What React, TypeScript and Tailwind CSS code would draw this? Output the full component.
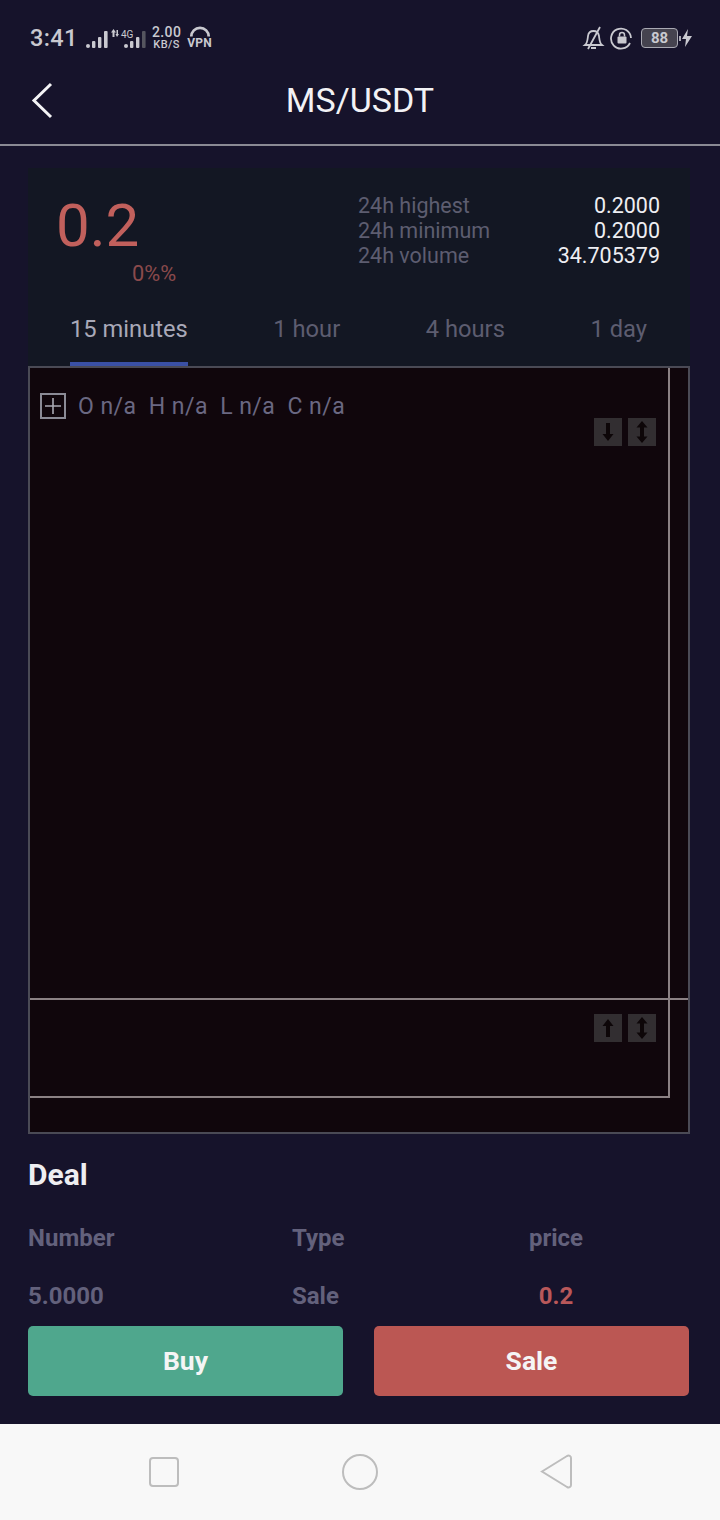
const Bars = ({ dim = false }: { dim?: boolean }) => (
  <svg width="22" height="17" viewBox="0 0 22 17" className="block">
    <circle cx="2" cy="15" r="2" fill="#c9c9d0" />
    <rect x="6" y="10" width="3.400" height="7" rx="1" fill="#c9c9d0" />
    <rect x="12" y="6" width="3.400" height="11" rx="1" fill="#c9c9d0" />
    <rect x="18" y="0" width="3.600" height="17" rx="1" fill={dim ? "#55555f" : "#c9c9d0"} />
  </svg>
);

const ArrowBtn = ({ type }: { type: "up" | "down" | "both" }) => (
  <div className="w-7 h-7 bg-[#322e31] flex items-center justify-center">
    <svg width="16" height="24" viewBox="0 0 16 24">
      {type === "down" && <path d="M6 3h4v11h3.500L8 21 2.500 14H6z" fill="#0d0608" />}
      {type === "up" && <path d="M6 21h4V10h3.500L8 3 2.500 10H6z" fill="#0d0608" />}
      {type === "both" && <path d="M8 1l5.500 6.500H10v9h3.500L8 23l-5.500-6.500H6v-9H2.500z" fill="#0d0608" />}
    </svg>
  </div>
);

export default function App() {
  const font = { fontFamily: "Roboto, sans-serif" };
  return (
    <div style={font} className="w-[720px] h-[1520px] bg-[#16132b] flex flex-col overflow-hidden">
      {/* status bar */}
      <div className="h-[72px] pl-[30px] pr-[28px] pt-[24px] flex justify-between items-start text-[#c9c9d0]">
        <div className="flex items-center h-[28px]">
          <span className="text-[23.500px] font-medium tracking-[0.4px] leading-none mt-[2px]">3:41</span>
          <div className="ml-[8px] mt-[3px]"><Bars /></div>
          <div className="ml-[2px] relative w-[38px] h-[20px] mt-[-1px]">
            <svg width="8" height="8" viewBox="0 0 8 8" className="absolute left-[1px] top-[1px]">
              <path d="M2.500 0L0 3.500h1.500V8h2V3.500H5zM6 8l2-3H7V1H5.500v4H4.500z" fill="#c9c9d0" />
            </svg>
            <span className="absolute left-[11px] top-[2px] text-[10px] leading-none">4G</span>
            <div className="absolute left-[14px] top-[3px]"><Bars dim /></div>
          </div>
          <div className="ml-[4px] flex flex-col items-center font-medium leading-none">
            <span className="text-[14px] leading-[13px] tracking-[0.4px]">2.00</span>
            <span className="text-[11px] leading-[12px] tracking-[0.4px]">KB/S</span>
          </div>
          <div className="ml-[6px] flex flex-col items-center -mt-[2px]">
            <svg width="22" height="13" viewBox="0 0 24 13" className="block">
              <path d="M2.500 12a9.500 9.500 0 0 1 19 0" fill="none" stroke="#c9c9d0" strokeWidth="3" />
              <path d="M7 6l7 4 1-2z" fill="#16132b" />
            </svg>
            <span className="text-[12px] leading-[11px] font-bold tracking-[0.2px]">VPN</span>
          </div>
        </div>
        <div className="flex items-center h-[28px]">
          <svg width="24" height="26" viewBox="0 0 24 26" fill="none" stroke="#c9c9d0" strokeWidth="1.800">
            <path d="M3 20c2.500-2 2.500-5 3-9 .4-3 2.500-5 5.500-5s5 2 5.500 5c.5 4 .5 7 3 9z" />
            <path d="M9 23h5M18 2L6 24" />
          </svg>
          <svg width="24" height="24" viewBox="0 0 24 24" className="ml-[4px]" fill="none">
            <path d="M20 17a10 10 0 1 1 1-5" stroke="#c9c9d0" strokeWidth="1.800" />
            <rect x="7.500" y="10.500" width="9" height="7" rx="1" fill="#c9c9d0" />
            <path d="M9.500 10.500V9a2.500 2.500 0 0 1 5 0v1.500" stroke="#c9c9d0" strokeWidth="1.500" />
          </svg>
          <div className="ml-[7px] w-[37px] h-[20px] rounded-[4px] border border-[#a9a9b3] bg-[#45434f] flex items-center justify-center text-[15px] font-bold leading-none">88</div>
          <div className="w-[2px] h-[5px] bg-[#a9a9b3] ml-[1px]" />
          <svg width="10" height="18" viewBox="0 0 10 18" className="ml-[1px]"><path d="M6 0L0 10h4l-1 8 7-11H5z" fill="#c9c9d0" /></svg>
        </div>
      </div>

      {/* header */}
      <div className="relative h-[74px] border-b-2 border-[#8a8a94] flex items-center justify-center">
        <svg width="24" height="38" viewBox="0 0 24 38" fill="none" className="absolute left-[31px] top-[10px]">
          <path d="M20 2L3 18.500 20 35" stroke="#f4f4f6" strokeWidth="3" />
        </svg>
        <span className="text-[34px] text-[#f2f2f5] leading-none -mt-[16px]">MS/USDT</span>
      </div>

      {/* ticker + intervals */}
      <div className="mx-[28px] mt-[22px] w-[662px] h-[198px] bg-[#131723] flex flex-col">
        <div className="h-[124px] flex">
          <div className="w-[330px] pl-[28px] pt-[24px] relative">
            <div className="text-[60px] leading-[68px] text-[#c1605c]">0.2</div>
            <div className="absolute left-[104px] top-[93px] text-[21.800px] leading-[26px] text-[#8a4a4c]">0%%</div>
          </div>
          <div className="flex-1 pt-[25px] pr-[30px] text-[21.500px] leading-[25px]">
            <div className="flex justify-between"><span className="text-[#5d5d70]">24h highest</span><span className="text-[#eeeef2]">0.2000</span></div>
            <div className="flex justify-between"><span className="text-[#5d5d70]">24h minimum</span><span className="text-[#eeeef2]">0.2000</span></div>
            <div className="flex justify-between"><span className="text-[#5d5d70]">24h volume</span><span className="text-[#eeeef2]">34.705379</span></div>
          </div>
        </div>
        <div className="flex-1 flex text-[23.700px] text-[#5d5d70] pl-[42px] pr-[43px] justify-between">
          <div className="flex flex-col items-center justify-between text-[#a9a9b8] h-[74px]">
            <span className="leading-[28px] mt-[23px]">15 minutes</span>
            <div className="w-full h-[4px] bg-[#3a50a5]" />
          </div>
          <span className="leading-[28px] mt-[23px]">1 hour</span>
          <span className="leading-[28px] mt-[23px]">4 hours</span>
          <span className="leading-[28px] mt-[23px]">1 day</span>
        </div>
      </div>

      {/* chart */}
      <div className="mx-[28px] w-[662px] h-[768px] bg-[#10060c] border-2 border-[#4a4a55] flex flex-col">
        <div className="h-[632px] border-b-2 border-[#8b8184]">
          <div className="relative w-[640px] h-full border-r-2 border-[#8b8184]">
            <div className="absolute left-[10px] top-[25px] flex items-center">
              <div className="w-[26px] h-[26px] border-2 border-[#8b8b96] flex items-center justify-center">
                <svg width="16" height="16" viewBox="0 0 16 16"><path d="M8 0v16M0 8h16" stroke="#a9a9b3" strokeWidth="1.600" /></svg>
              </div>
              <span className="ml-[12px] text-[23px] leading-none tracking-[0.45px] text-[#6a6882] whitespace-pre">O n/a  H n/a  L n/a  C n/a</span>
            </div>
            <div className="absolute left-[564px] top-[50px] flex gap-[6px]">
              <ArrowBtn type="down" />
              <ArrowBtn type="both" />
            </div>
          </div>
        </div>
        <div className="relative w-[640px] h-[98px] border-r-2 border-b-2 border-[#8b8184]">
          <div className="absolute left-[564px] top-[14px] flex gap-[6px]">
            <ArrowBtn type="up" />
            <ArrowBtn type="both" />
          </div>
        </div>
      </div>

      {/* deal */}
      <div className="pl-[28px] pr-[31px] flex-1 flex flex-col">
        <div className="mt-[24px] text-[30px] leading-[34px] font-bold text-[#eeeef2]">Deal</div>
        <div className="mt-[32px] grid grid-cols-[264px_264px_1fr] text-[24px] leading-[28px] font-bold text-[#63617c]">
          <span>Number</span>
          <span>Type</span>
          <span className="-ml-[50px] w-[100px] text-center">price</span>
        </div>
        <div className="mt-[30px] grid grid-cols-[264px_264px_1fr] text-[24px] leading-[28px] font-bold text-[#63617c]">
          <span>5.0000</span>
          <span>Sale</span>
          <span className="-ml-[50px] w-[100px] text-center text-[#b9585a]">0.2</span>
        </div>
        <div className="mt-[16px] flex justify-between">
          <div className="w-[315px] h-[70px] rounded-[5px] bg-[#4fa78d] flex items-center justify-center text-[26.500px] leading-[30px] font-bold text-[#f5f5f5]">Buy</div>
          <div className="w-[315px] h-[70px] rounded-[5px] bg-[#bb5753] flex items-center justify-center text-[26.500px] leading-[30px] font-bold text-[#f5f5f5]">Sale</div>
        </div>
      </div>

      {/* nav bar */}
      <div className="h-[96px] bg-[#f8f8f8] relative flex items-center">
        <div className="absolute left-[149px] top-[33px] w-[30px] h-[30px] border-2 border-[#bdbdbd] rounded-[4px]" />
        <div className="absolute left-[342px] top-[30px] w-[36px] h-[36px] border-2 border-[#bdbdbd] rounded-full" />
        <svg width="34" height="36" viewBox="0 0 34 36" className="absolute left-[539px] top-[30px]" fill="none">
          <path d="M3 17.500L28 2c2-1 4 0 4 2v27c0 2-2 3-4 2z" stroke="#bdbdbd" strokeWidth="2" />
        </svg>
      </div>
    </div>
  );
}
